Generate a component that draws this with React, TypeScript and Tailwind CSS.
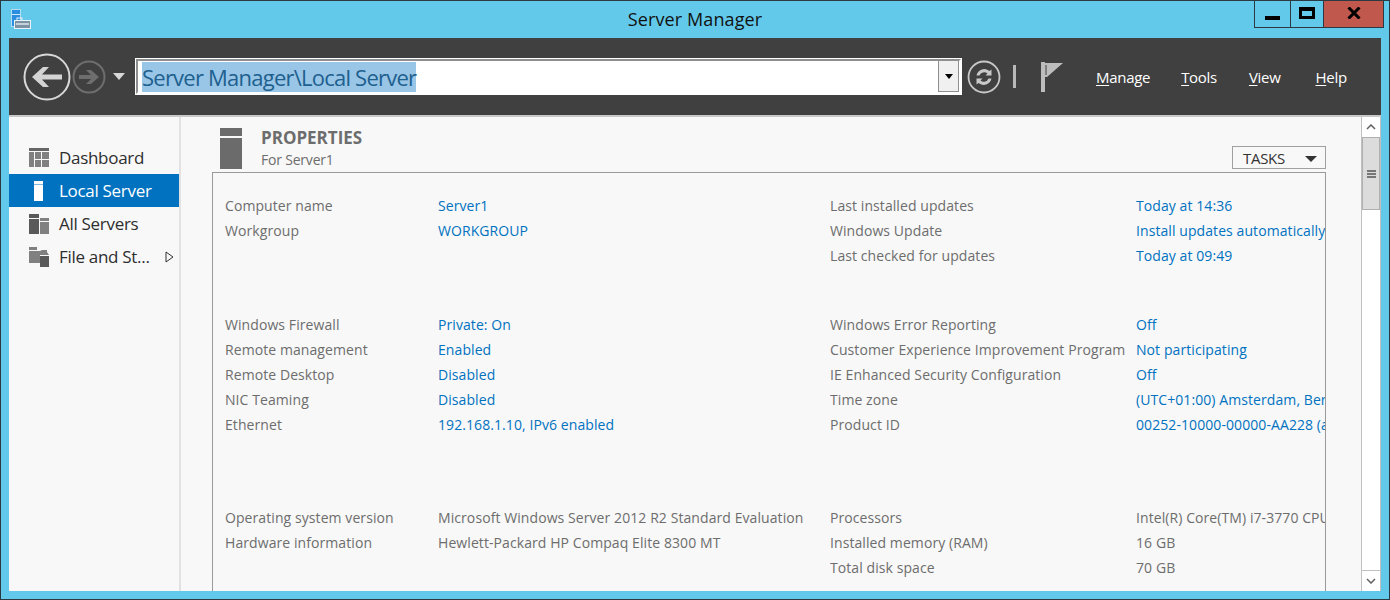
import type { ReactNode } from "react";

const font = "font-['Open_Sans','Noto_Sans',sans-serif]";

type Row = { label: string; value: string; link?: boolean };
type Group = { className: string; left: Row[]; right: Row[] };

const groups: Group[] = [
  {
    className: "mt-[20px]",
    left: [
      { label: "Computer name", value: "Server1", link: true },
      { label: "Workgroup", value: "WORKGROUP", link: true },
    ],
    right: [
      { label: "Last installed updates", value: "Today at 14:36", link: true },
      { label: "Windows Update", value: "Install updates automatically using Windows Update", link: true },
      { label: "Last checked for updates", value: "Today at 09:49", link: true },
    ],
  },
  {
    className: "mt-[44px]",
    left: [
      { label: "Windows Firewall", value: "Private: On", link: true },
      { label: "Remote management", value: "Enabled", link: true },
      { label: "Remote Desktop", value: "Disabled", link: true },
      { label: "NIC Teaming", value: "Disabled", link: true },
      { label: "Ethernet", value: "192.168.1.10, IPv6 enabled", link: true },
    ],
    right: [
      { label: "Windows Error Reporting", value: "Off", link: true },
      { label: "Customer Experience Improvement Program", value: "Not participating", link: true },
      { label: "IE Enhanced Security Configuration", value: "Off", link: true },
      { label: "Time zone", value: "(UTC+01:00) Amsterdam, Berlin, Bern, Rome", link: true },
      { label: "Product ID", value: "00252-10000-00000-AA228 (activated)", link: true },
    ],
  },
  {
    className: "mt-[68px]",
    left: [
      { label: "Operating system version", value: "Microsoft Windows Server 2012 R2 Standard Evaluation" },
      { label: "Hardware information", value: "Hewlett-Packard HP Compaq Elite 8300 MT" },
    ],
    right: [
      { label: "Processors", value: "Intel(R) Core(TM) i7-3770 CPU @ 3.40GHz" },
      { label: "Installed memory (RAM)", value: "16 GB" },
      { label: "Total disk space", value: "70 GB" },
    ],
  },
];

function PropRow({ row, labelWidth }: { row: Row; labelWidth: string }) {
  return (
    <div className="flex h-[25px] items-center whitespace-nowrap text-[14px] tracking-[0.08px]">
      <span className={`${labelWidth} shrink-0 text-[#6d6d6d]`}>{row.label}</span>
      <span className={row.link ? "text-[#0072c0]" : "text-[#6d6d6d]"}>{row.value}</span>
    </div>
  );
}

function NavItem({ icon, label, active, arrow }: { icon: ReactNode; label: string; active?: boolean; arrow?: boolean }) {
  return (
    <div className={`flex h-[33px] items-center pl-[20px] text-[17px] tracking-[-0.3px] ${active ? "bg-[#0072c0] text-white" : "text-[#2e2e2e]"}`}>
      <span className="flex w-[30px] shrink-0 justify-start">{icon}</span>
      <span className="whitespace-nowrap">{label}</span>
      {arrow && (
        <svg width="9" height="12" viewBox="0 0 9 12" className="ml-[15px]">
          <path d="M1 1l7 5-7 5z" fill="#f8f8f8" stroke="#333" />
        </svg>
      )}
    </div>
  );
}

function MenuItem({ first, rest, className }: { first: string; rest: string; className: string }) {
  return (
    <span className={`mt-[2px] text-[15px] tracking-[-0.3px] text-white ${className}`}>
      <span className="underline underline-offset-2">{first}</span>
      {rest}
    </span>
  );
}

export default function App() {
  return (
    <div className={`${font} flex h-[600px] w-[1390px] flex-col overflow-hidden border border-[#2b3a42] bg-[#63c9ea]`}>
      {/* title bar */}
      <div className="relative flex h-[37px] shrink-0 items-center justify-center">
        <svg width="20" height="20" viewBox="0 0 20 20" className="absolute left-[10px] top-[8px]">
          <rect x="0.5" y="0.5" width="9" height="17" fill="#2a8fe0" stroke="#b5dcf2" />
          <rect x="1" y="5" width="8" height="1" fill="#cfe8f8" />
          <rect x="6" y="9" width="5" height="3" fill="none" stroke="#e8f4fa" />
          <rect x="3.500" y="11.500" width="16" height="8" fill="#7d93a3" stroke="#e8f4fa" />
          <rect x="5" y="14" width="13" height="2" fill="#c5d2dc" />
        </svg>
        <span className="text-[18px] tracking-[0.1px] text-[#111]">Server Manager</span>
        <div className="absolute right-[5px] top-[-1px] flex h-[28px] border border-t-0 border-[#2b3a42]">
          <div className="flex w-[36px] items-end justify-center border-r border-[#2b3a42] pb-[7px]">
            <div className="h-[4px] w-[15px] bg-black" />
          </div>
          <div className="flex w-[33px] items-center justify-center border-r border-[#2b3a42] pb-[2px]">
            <div className="h-[12px] w-[16px] border-[3px] border-t-[4px] border-black" />
          </div>
          <div className="flex w-[59px] items-center justify-center bg-[#c0584e] pb-[1px]">
            <svg width="14" height="12" viewBox="0 0 14 12">
              <path d="M1.5 0.5L12.5 11.5M12.5 0.5L1.5 11.5" stroke="#000" strokeWidth="3" />
            </svg>
          </div>
        </div>
      </div>

      <div className="mx-[8px] flex min-h-0 flex-1 flex-col">
        {/* header */}
        <div className="flex h-[77px] shrink-0 items-center bg-[#404040] pl-[13px]">
          <svg width="50" height="50" viewBox="0 0 50 50" className="shrink-0">
            <circle cx="25" cy="25" r="22.5" fill="none" stroke="#d8d8d8" strokeWidth="2" />
            <path d="M40 22.500H20l7-7.500h-6L10 25l11 10h6l-7-7.500h20z" fill="#d4d4d4" />
          </svg>
          <svg width="34" height="34" viewBox="0 0 34 34" className="shrink-0">
            <circle cx="17" cy="17" r="15.500" fill="none" stroke="#6e6e6e" strokeWidth="2" />
            <path d="M7 15h12l-5-5h5l8 7-8 7h-5l5-5H7z" fill="#6e6e6e" />
          </svg>
          <div className="ml-[7px] mr-[11px] h-0 w-0 border-x-[6px] border-t-[7px] border-x-transparent border-t-[#d8d8d8]" />
          <div className="flex h-[35px] w-[825px] shrink-0 items-center border-2 border-b-white border-l-[#8f8f8f] border-r-white border-t-[#8f8f8f] bg-white pl-[4px] outline outline-1 outline-white">
            <span className="flex h-[30px] items-center bg-[#99c6e6] text-[22px] leading-none tracking-[-0.77px] text-[#20608f]">
              Server Manager\Local Server
            </span>
            <div className="ml-auto flex h-full w-[21px] items-center justify-center border-x border-b border-[#8f8f8f] bg-[#f0f0f0]">
              <div className="h-0 w-0 border-x-[4px] border-t-[5px] border-x-transparent border-t-black" />
            </div>
          </div>
          <svg width="34" height="34" viewBox="0 0 34 34" className="ml-[6px] shrink-0">
            <circle cx="17" cy="17" r="15.500" fill="none" stroke="#c8c8c8" strokeWidth="1.800" />
            <path d="M9.500 15.500a8 8 0 0 1 13-4.500l2-1.500v6h-6l2-2a5 5 0 0 0-8 2zM24.500 18.500a8 8 0 0 1-13 4.500l-2 1.500v-6h6l-2 2a5 5 0 0 0 8-2z" fill="#c8c8c8" />
          </svg>
          <div className="ml-[12px] h-[23px] w-[3px] shrink-0 bg-[#b8b8b8]" />
          <svg width="24" height="30" viewBox="0 0 24 30" className="ml-[25px] shrink-0">
            <rect x="0" y="0" width="4" height="30" fill="#bdbdbd" />
            <path d="M4 1h18L6 15H4z" fill="#bdbdbd" />
            <path d="M5 3v10" stroke="#404040" strokeWidth="1" />
          </svg>
          <MenuItem first="M" rest="anage" className="ml-[31px]" />
          <MenuItem first="T" rest="ools" className="ml-[31px]" />
          <MenuItem first="V" rest="iew" className="ml-[32px]" />
          <MenuItem first="H" rest="elp" className="ml-[35px]" />
        </div>

        {/* body */}
        <div className="flex min-h-0 flex-1 border-t-2 border-[#c8c8c8] bg-[#f8f8f8]">
          {/* sidebar */}
          <div className="flex w-[170px] shrink-0 flex-col pt-[24px]">
            <NavItem
              label="Dashboard"
              icon={
                <svg width="20" height="20" viewBox="0 0 20 20">
                  <path d="M0 0h20v3H0z" fill="#666" />
                  <path d="M0 4h5v15H0zM6 4h6v7H6zM13 4h7v7h-7zM6 12h6v7H6zM13 12h7v7h-7z" fill="#808080" />
                </svg>
              }
            />
            <NavItem
              active
              label="Local Server"
              icon={
                <svg width="20" height="20" viewBox="0 0 20 20">
                  <path d="M5 0h9v3H5zM5 4h9v16H5z" fill="#fff" />
                  <path d="M5 3h9v1H5z" fill="#7fb8e0" />
                </svg>
              }
            />
            <NavItem
              label="All Servers"
              icon={
                <svg width="20" height="20" viewBox="0 0 20 20">
                  <path d="M0 0h10v4H0zM0 5h10v15H0z" fill="#595959" />
                  <path d="M11 4h9v3h-9zM11 8h9v12h-9z" fill="#808080" />
                </svg>
              }
            />
            <NavItem
              arrow
              label="File and St..."
              icon={
                <svg width="20" height="20" viewBox="0 0 20 20">
                  <path d="M0 0h8v3H0zM0 4h11l2-1h5v2l2 3H11v8H0z" fill="#808080" />
                  <path d="M11 9h9v11h-9z" fill="#595959" />
                </svg>
              }
            />
          </div>
          {/* splitter */}
          <div className="w-[2px] shrink-0 bg-[#e2e2e2]" />

          {/* main */}
          <div className="relative min-w-0 flex-1 overflow-hidden pl-[31px] pr-[35px]">
            <div className="flex h-[55px] items-start">
              <svg width="22" height="41" viewBox="0 0 22 41" className="ml-[8px] mt-[11px] shrink-0">
                <rect width="22" height="8" fill="#6b6b6b" />
                <rect y="10" width="22" height="31" fill="#6b6b6b" />
              </svg>
              <div className="ml-[19px] mt-[10px] flex flex-col">
                <span className="text-[17px] font-bold leading-[22px] tracking-[0px] text-[#6d6d6d]">PROPERTIES</span>
                <span className="mt-[1px] text-[14px] leading-[20px] tracking-[-0.2px] text-[#6d6d6d]">For Server1</span>
              </div>
              <div className="ml-auto mt-[29px] flex h-[23px] w-[94px] items-center border border-[#a0a0a0] pl-[10px] pt-[2px] text-[15px] tracking-[-0.3px] text-[#333]">
                TASKS
                <div className="ml-auto mr-[8px] h-0 w-0 border-x-[6px] border-t-[6px] border-x-transparent border-t-[#333]" />
              </div>
            </div>
            <div className="h-[500px] overflow-hidden border border-[#9a9a9a] pl-[12px]">
              {groups.map((g) => (
                <div key={g.className} className={`flex ${g.className}`}>
                  <div className="w-[605px] shrink-0">
                    {g.left.map((r) => (
                      <PropRow key={r.label} row={r} labelWidth="w-[213px]" />
                    ))}
                  </div>
                  <div className="min-w-0 flex-1 overflow-hidden">
                    {g.right.map((r) => (
                      <PropRow key={r.label} row={r} labelWidth="w-[306px]" />
                    ))}
                  </div>
                </div>
              ))}
            </div>
          </div>

          {/* scrollbar */}
          <div className="flex w-[20px] shrink-0 flex-col border-x border-[#c0c0c0] bg-white">
            <div className="flex h-[20px] shrink-0 items-center justify-center">
              <svg width="10" height="6" viewBox="0 0 10 6">
                <path d="M1 5l4-4 4 4" fill="none" stroke="#606060" strokeWidth="1.500" />
              </svg>
            </div>
            <div className="flex h-[73px] shrink-0 flex-col items-center justify-center gap-[1px] border border-[#b0b0b0] bg-[#dcdcdc]">
              <div className="h-[2px] w-[9px] bg-[#777]" />
              <div className="h-[2px] w-[9px] bg-[#777]" />
              <div className="h-[2px] w-[9px] bg-[#777]" />
            </div>
            <div className="flex-1" />
            <div className="flex h-[21px] shrink-0 items-center justify-center border-t border-[#c0c0c0]">
              <svg width="10" height="6" viewBox="0 0 10 6">
                <path d="M1 1l4 4 4-4" fill="none" stroke="#606060" strokeWidth="1.500" />
              </svg>
            </div>
          </div>
        </div>
      </div>
      <div className="h-[8px] shrink-0" />
    </div>
  );
}
